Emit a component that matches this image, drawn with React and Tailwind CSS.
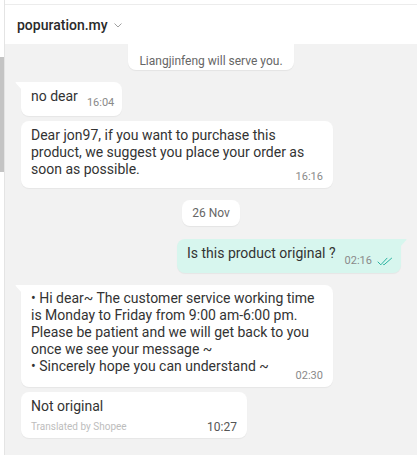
import React from 'react';

function Tail({ side, color }) {
  // little speech-bubble tail on the top corner
  if (side === 'left') {
    return (
      <svg className="absolute top-0 -left-[6px]" width="7" height="8" viewBox="0 0 7 8">
        <path d="M7 0 H1.2 Q0 0 0.7 0.9 L7 8 Z" fill={color} />
      </svg>
    );
  }
  return (
    <svg className="absolute top-0 -right-[6px]" width="7" height="8" viewBox="0 0 7 8">
      <path d="M0 0 H5.8 Q7 0 6.3 0.9 L0 8 Z" fill={color} />
    </svg>
  );
}

function Time({ children }) {
  return <span className="block text-[11px] leading-[14px] text-[#8a8a8a] whitespace-nowrap">{children}</span>;
}

function DoubleCheck() {
  return (
    <svg width="16" height="9" viewBox="0 0 16 9" fill="none" stroke="#2bb3a0" strokeWidth="1" strokeLinecap="round" strokeLinejoin="round">
      <path d="M1 5 L3.8 7.8 L10 1.2" />
      <path d="M6.6 7.6 L7 7.8 L14.6 1.2" />
    </svg>
  );
}

export default function App() {
  return (
    <div className="flex w-[417px] h-[455px] bg-white overflow-hidden leading-[14px]" style={{ fontFamily: 'Roboto, "Noto Sans", sans-serif' }}>
      {/* outer scroll strip */}
      <div className="w-[4px] shrink-0 flex flex-col">
        <div className="mt-[57px] h-[115px] bg-[#c4c4c4]" />
      </div>

      <div className="flex-1 flex flex-col border-l border-[#e4e4e4]">
        <div className="h-[5px] border-b border-[#ececec]" />

        {/* Header */}
        <div className="h-[39px] flex items-center pl-3 gap-[6px] bg-white">
          <span className="text-[14px] leading-[20px] font-medium text-[#2a2a2a]">popuration.my</span>
          <svg width="8" height="5" viewBox="0 0 8 5" fill="none" stroke="#a0a0a0" strokeWidth="1" strokeLinecap="round" strokeLinejoin="round" className="mt-[2px]">
            <path d="M0.8 0.8 L4 4 L7.2 0.8" />
          </svg>
        </div>

        {/* Chat area */}
        <div className="flex-1 bg-[#f2f2f2] flex flex-col px-4">
          <div className="self-center bg-white rounded-b-lg px-[11px] pt-[10px] pb-[2px] shadow-[0_1px_1px_rgba(0,0,0,0.06)]">
            <span className="block text-[12px] leading-[14px] text-[#666]">Liangjinfeng will serve you.</span>
          </div>

          {/* no dear */}
          <div className="relative self-start mt-[12px] bg-white rounded-lg rounded-tl-none pl-[10px] pr-[8px] pt-[6px] pb-[11px] flex items-end gap-[9px] shadow-[0_1px_1px_rgba(0,0,0,0.05)]">
            <Tail side="left" color="#fff" />
            <span className="text-[14px] leading-[17px] text-[#333]">no dear</span>
            <span className="translate-y-[5px]"><Time>16:04</Time></span>
          </div>

          {/* Dear jon97 */}
          <div className="self-start mt-[5px] w-[312px] bg-white rounded-lg px-[10px] pt-[6px] pb-[4px] shadow-[0_1px_1px_rgba(0,0,0,0.05)]">
            <p className="text-[14px] leading-[17px] text-[#333]">
              Dear jon97, if you want to purchase this product, we suggest you place your order as soon as possible.
            </p>
            <div className="flex justify-end -mt-[8px]">
              <Time>16:16</Time>
            </div>
          </div>

          {/* date */}
          <div className="self-center mt-[12px] bg-white rounded-lg h-[26px] px-[10px] flex items-center shadow-[0_1px_1px_rgba(0,0,0,0.06)]">
            <span className="text-[12px] leading-[14px] text-[#666]">26 Nov</span>
          </div>

          {/* outgoing */}
          <div className="relative self-end mt-[13px] bg-[#d7f6ee] rounded-lg rounded-tr-none pl-[10px] pr-[8px] pt-[6px] pb-[11px] flex items-end gap-[9px] shadow-[0_1px_1px_rgba(0,0,0,0.05)]">
            <Tail side="right" color="#d7f6ee" />
            <span className="text-[14px] leading-[17px] text-[#333]">Is this product original ?</span>
            <span className="flex items-center gap-[5px] translate-y-[6px]">
              <Time>02:16</Time>
              <DoubleCheck />
            </span>
          </div>

          {/* long incoming */}
          <div className="relative self-start mt-[12px] w-[312px] bg-white rounded-lg rounded-tl-none px-[10px] pt-[5px] pb-[4px] shadow-[0_1px_1px_rgba(0,0,0,0.05)]">
            <Tail side="left" color="#fff" />
            <p className="text-[14px] leading-[17px] text-[#333]">
              • Hi dear~ The customer service working time is Monday to Friday from 9:00 am-6:00 pm. Please be patient and we will get back to you once we see your message ~
              <br />
              • Sincerely hope you can understand ~
            </p>
            <div className="flex justify-end -mt-[6px]">
              <Time>02:30</Time>
            </div>
          </div>

          {/* Not original */}
          <div className="self-start mt-[5px] w-[226px] bg-white rounded-lg px-[10px] pt-[6px] pb-[4px] shadow-[0_1px_1px_rgba(0,0,0,0.05)]">
            <p className="text-[14px] leading-[17px] text-[#333]">Not original</p>
            <div className="flex items-center justify-between mt-[5px] h-[14px]">
              <span className="text-[10px] leading-[14px] text-[#bdbdbd]">Translated by Shopee</span>
              <span className="text-[12px] leading-[14px] text-[#555]">10:27</span>
            </div>
          </div>
        </div>
      </div>
    </div>
  );
}
